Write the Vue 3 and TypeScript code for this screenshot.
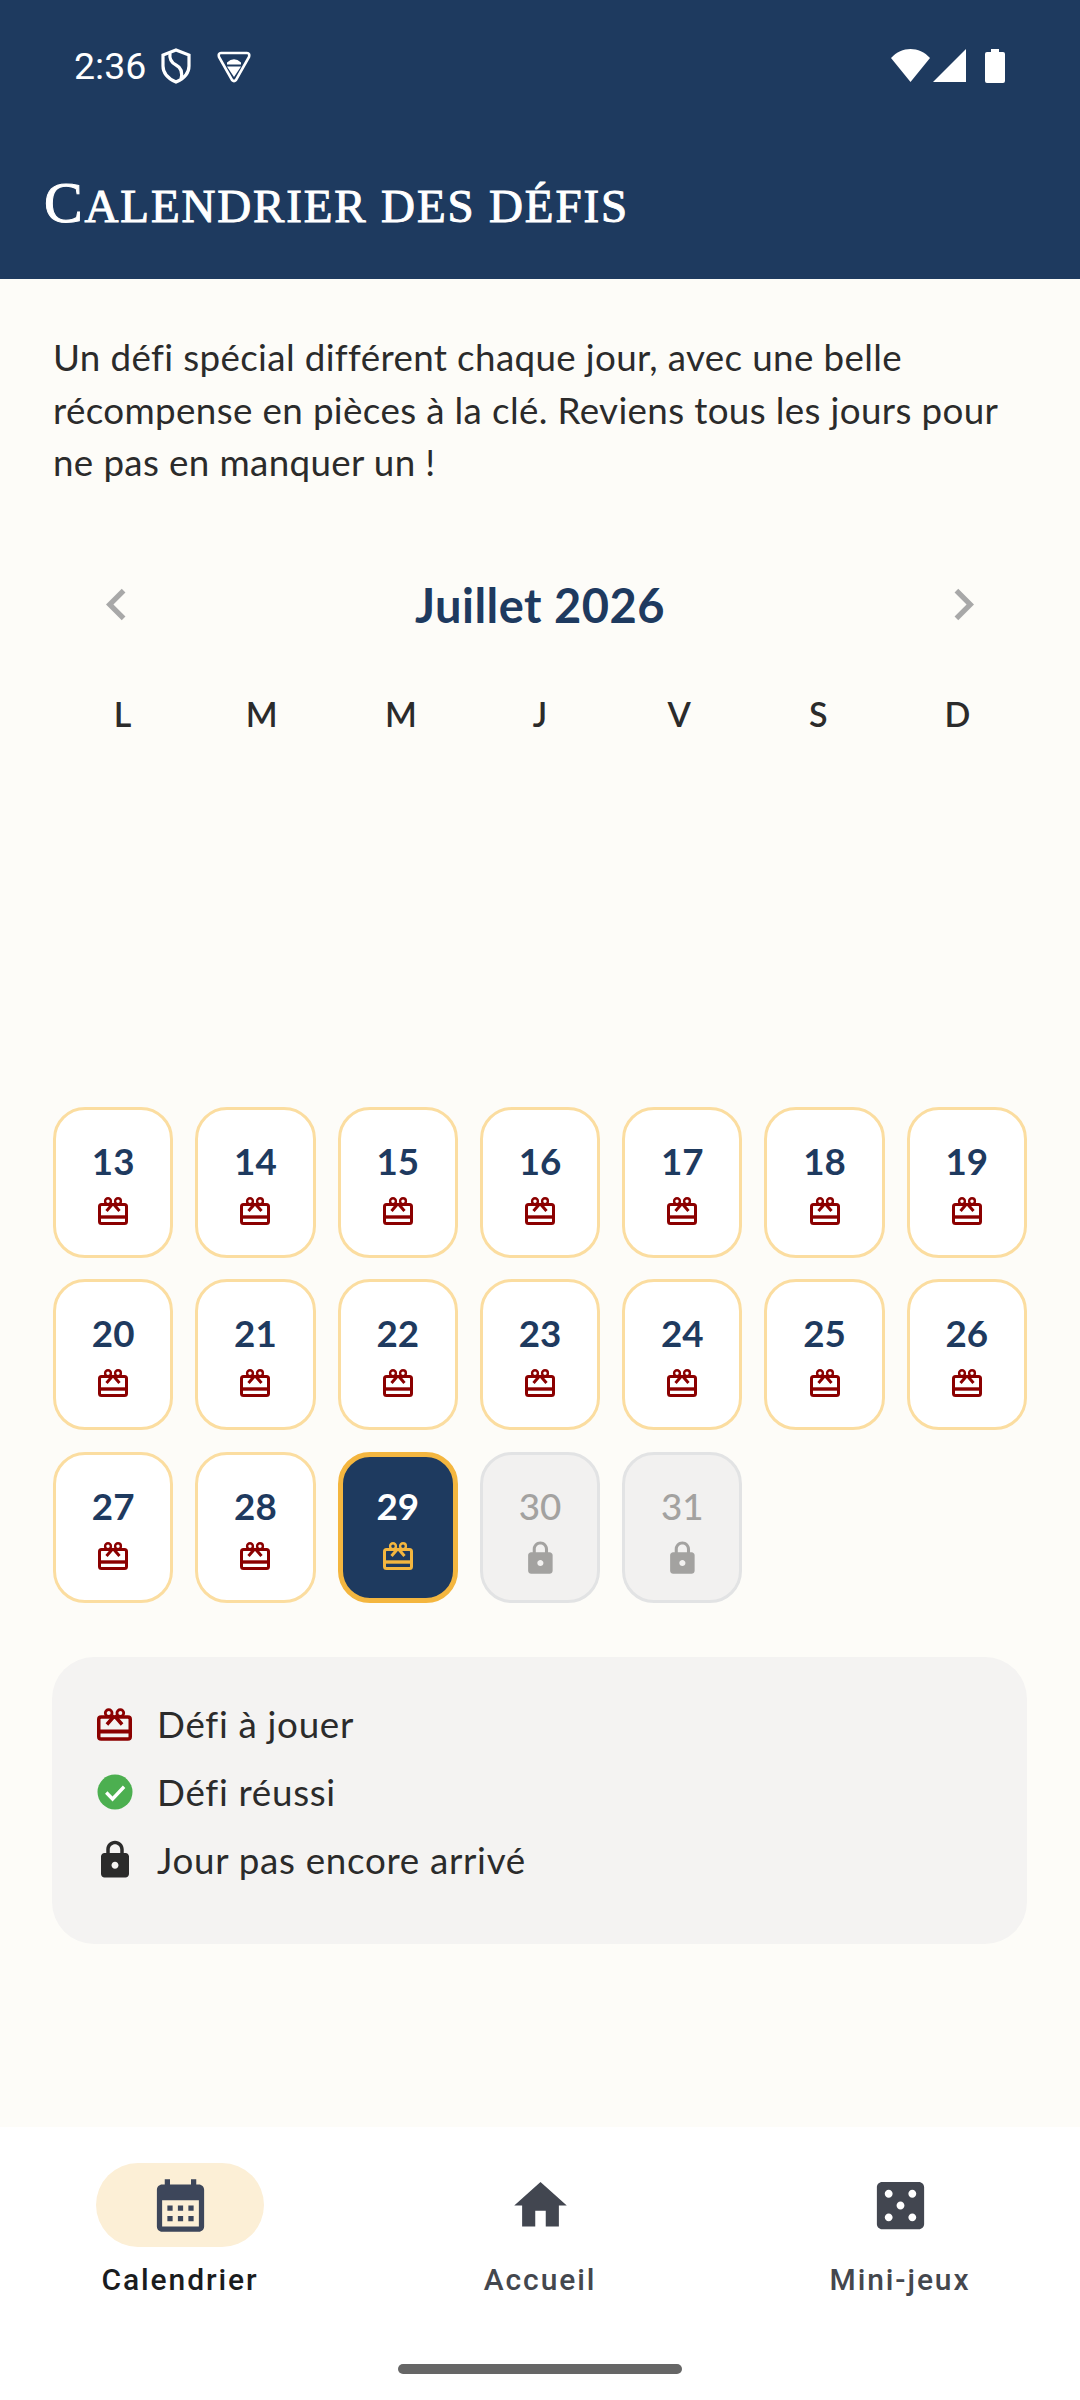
<script setup lang="ts">
type DayState = 'empty' | 'hidden' | 'open' | 'today' | 'locked';

interface Day {
  num: number | null;
  state: DayState;
}

const today = 29;
const weekdays = ['L', 'M', 'M', 'J', 'V', 'S', 'D'];

// juillet 2026 commence un mercredi, les jours avant le 13 ne sont pas affichés
const days: Day[] = [
  { num: null, state: 'empty' },
  { num: null, state: 'empty' },
];
for (let n = 1; n <= 31; n++) {
  let state: DayState = 'open';
  if (n < 13) state = 'hidden';
  else if (n === today) state = 'today';
  else if (n > today) state = 'locked';
  days.push({ num: n, state });
}

const lockPath =
  'M18 8h-1V6c0-2.76-2.24-5-5-5S7 3.24 7 6v2H6c-1.1 0-2 .9-2 2v10c0 1.1.9 2 2 2h12c1.1 0 2-.9 2-2V10c0-1.1-.9-2-2-2zm-6 9c-1.1 0-2-.9-2-2s.9-2 2-2 2 .9 2 2-.9 2-2 2zM9 8V6c0-1.66 1.34-3 3-3s3 1.34 3 3v2H9z';
</script>

<template>
  <div class="page">
    <header class="top">
      <div class="status">
        <span class="time">2:36</span>
        <svg class="st-shield" viewBox="0 0 30 36" fill="none" stroke="#fff" stroke-width="3.2">
          <path d="M15 2 L28 7 V18 C28 26 22 31 15 34 C8 31 2 26 2 18 V7 Z" />
          <path d="M9 5 C8 12 11 15 15 17 C19 19 22 23 20 31" />
        </svg>
        <svg class="st-tri" viewBox="0 0 34 32" fill="none">
          <path d="M4 2 H30 Q33 2 32 6 L19 29 Q17 31 15 29 L2 6 Q1 2 4 2 Z" stroke="#fff" stroke-width="2.6" />
          <path d="M10 11.5 Q17 5 24 11.5 V13.5 H10 Z M10 15.5 H24 L17 26 Z" fill="#fff" />
        </svg>
        <span class="spacer"></span>
        <svg class="st-wifi" viewBox="0 0 40 33" fill="#fff" preserveAspectRatio="none">
          <path d="M0 9 C11 -3 29 -3 40 9 L20 33 Z" />
        </svg>
        <svg class="st-signal" viewBox="0 0 33 33" fill="#fff">
          <path d="M33 0 V33 H0 Z" />
        </svg>
        <svg class="st-batt" viewBox="0 0 20 34" fill="#fff">
          <path d="M6 0 H14 V3 H18 Q20 3 20 5 V32 Q20 34 18 34 H2 Q0 34 0 32 V5 Q0 3 2 3 H6 Z" />
        </svg>
      </div>
      <h1 class="title">Calendrier des défis</h1>
    </header>

    <main class="content">
      <p class="intro">
        Un défi spécial différent chaque jour, avec une belle récompense en pièces à la clé. Reviens tous les jours pour ne pas en manquer un !
      </p>

      <div class="month-row">
        <svg class="chev" viewBox="0 0 24 24"><path d="M15.41 7.41 14 6l-6 6 6 6 1.41-1.41L10.83 12z" /></svg>
        <span class="month">Juillet 2026</span>
        <svg class="chev" viewBox="0 0 24 24"><path d="M8.59 16.59 10 18l6-6-6-6-1.41 1.41L13.17 12z" /></svg>
      </div>

      <div class="weekdays">
        <span v-for="(w, i) in weekdays" :key="i">{{ w }}</span>
      </div>

      <div class="grid">
        <div
          v-for="(d, i) in days"
          :key="i"
          class="cell"
          :class="d.state"
        >
          <template v-if="d.num">
            <span class="num">{{ d.num }}</span>
            <svg v-if="d.state === 'locked'" class="cell-lock" viewBox="0 0 24 24"><path :d="lockPath" /></svg>
            <svg v-else class="gift" viewBox="0 0 30 28" fill="none" stroke="currentColor" stroke-width="3">
              <rect x="1.5" y="7.5" width="27" height="19" rx="2" />
              <path d="M1.5 20 H28.5" stroke-width="3.4" />
              <path d="M15 6.5 L8.5 14 M15 6.5 L21.5 14" stroke-width="3" />
              <circle cx="10" cy="4.2" r="2.9" stroke-width="2.4" />
              <circle cx="20" cy="4.2" r="2.9" stroke-width="2.4" />
            </svg>
          </template>
        </div>
      </div>

      <section class="legend">
        <div class="legend-item">
          <svg class="legend-gift" viewBox="0 0 30 28" fill="none" stroke="#8b0000" stroke-width="3">
            <rect x="1.5" y="7.5" width="27" height="19" rx="2" />
            <path d="M1.5 20 H28.5" stroke-width="3.4" />
            <path d="M15 6.5 L8.5 14 M15 6.5 L21.5 14" stroke-width="3" />
            <circle cx="10" cy="4.2" r="2.9" stroke-width="2.4" />
            <circle cx="20" cy="4.2" r="2.9" stroke-width="2.4" />
          </svg>
          <span>Défi à jouer</span>
        </div>
        <div class="legend-item">
          <svg class="legend-icon" viewBox="0 0 24 24">
            <circle cx="12" cy="12" r="10" fill="#4caf50" />
            <path d="M7 12.3 10.6 16 17.2 9" fill="none" stroke="#fff" stroke-width="1.9" />
          </svg>
          <span>Défi réussi</span>
        </div>
        <div class="legend-item">
          <svg class="legend-icon" viewBox="0 0 24 24" fill="#2b2b2b"><path :d="lockPath" /></svg>
          <span>Jour pas encore arrivé</span>
        </div>
      </section>
    </main>

    <nav class="nav">
      <div class="tabs">
        <div class="tab active">
          <div class="pill">
            <svg viewBox="0 0 24 24"><path d="M19 4h-1V2h-2v2H8V2H6v2H5c-1.11 0-1.99.9-1.99 2L3 20c0 1.1.89 2 2 2h14c1.1 0 2-.9 2-2V6c0-1.1-.9-2-2-2zm0 16H5V10h14v10zM9 14H7v-2h2v2zm4 0h-2v-2h2v2zm4 0h-2v-2h2v2zm-8 4H7v-2h2v2zm4 0h-2v-2h2v2zm4 0h-2v-2h2v2z" /></svg>
          </div>
          <span>Calendrier</span>
        </div>
        <div class="tab">
          <div class="pill">
            <svg viewBox="0 0 24 24"><path d="M10 20v-6h4v6h5v-8h3L12 3 2 12h3v8z" /></svg>
          </div>
          <span>Accueil</span>
        </div>
        <div class="tab">
          <div class="pill">
            <svg viewBox="0 0 24 24"><path d="M19 3H5c-1.1 0-2 .9-2 2v14c0 1.1.9 2 2 2h14c1.1 0 2-.9 2-2V5c0-1.1-.9-2-2-2zM7.5 18c-.83 0-1.5-.67-1.5-1.5S6.67 15 7.5 15s1.5.67 1.5 1.5S8.33 18 7.5 18zm0-9C6.67 9 6 8.33 6 7.5S6.67 6 7.5 6 9 6.67 9 7.5 8.33 9 7.5 9zm4.5 4.5c-.83 0-1.5-.67-1.5-1.5s.67-1.5 1.5-1.5 1.5.67 1.5 1.5-.67 1.5-1.5 1.5zm4.5 4.5c-.83 0-1.5-.67-1.5-1.5s.67-1.5 1.5-1.5 1.5.67 1.5 1.5-.67 1.5-1.5 1.5zm0-9c-.83 0-1.5-.67-1.5-1.5S15.67 6 16.5 6s1.5.67 1.5 1.5S17.33 9 16.5 9z" /></svg>
          </div>
          <span>Mini-jeux</span>
        </div>
      </div>
      <div class="home-bar"></div>
    </nav>
  </div>
</template>

<style scoped>
.page {
  width: 1080px;
  height: 2400px;
  display: flex;
  flex-direction: column;
  background: #fdfcf8;
  font-family: Lato, sans-serif;
  overflow: hidden;
}

.top {
  height: 279px;
  box-sizing: border-box;
  background: #1e3a5f;
  color: #fff;
}

.status {
  height: 168px;
  box-sizing: border-box;
  padding: 48px 75px 0 74px;
  display: flex;
  align-items: flex-start;
}

.time {
  font-family: Roboto, sans-serif;
  font-size: 37.5px;
  line-height: 36px;
}

.st-shield {
  width: 30px;
  height: 36px;
  margin-left: 15px;
}

.st-tri {
  width: 34px;
  height: 32px;
  margin: 3px 0 0 26px;
}

.spacer {
  flex: 1;
}

.st-wifi {
  width: 39px;
  height: 33px;
  margin-top: 1px;
}

.st-signal {
  width: 33px;
  height: 33px;
  margin: 1px 0 0 3px;
}

.st-batt {
  width: 20px;
  height: 34px;
  margin: 1px 0 0 19px;
}

.title {
  margin: 0;
  padding-left: 44px;
  font-family: "Liberation Serif", serif;
  text-transform: uppercase;
  font-weight: 400;
  font-size: 47px;
  line-height: 70px;
  letter-spacing: 1.85px;
  -webkit-text-stroke: 1px #fff;
}

.title::first-letter {
  font-size: 58px;
}

.content {
  flex: 1;
  padding: 52px 53px 0;
}

.intro {
  margin: 0;
  font-size: 36.75px;
  line-height: 52.5px;
  letter-spacing: 0.36px;
  color: #2b2b2b;
}

.month-row {
  height: 84px;
  margin-top: 74px;
  display: flex;
  align-items: center;
  justify-content: space-between;
  padding: 0 32px;
}

.month {
  font-size: 47px;
  font-weight: 700;
  letter-spacing: 0.5px;
  color: #1e3a5f;
}

.chev {
  width: 63px;
  height: 63px;
  fill: #a8a8a8;
}

.weekdays {
  display: grid;
  grid-template-columns: repeat(7, 1fr);
  height: 64px;
  margin-top: 35px;
  align-items: center;
  text-align: center;
  font-size: 34px;
  font-weight: 600;
  color: #2b2b2b;
}

.grid {
  display: grid;
  grid-template-columns: repeat(7, 1fr);
  grid-auto-rows: 151px;
  gap: 21.6px 22px;
  margin-top: 16px;
}

.cell {
  box-sizing: border-box;
  border-radius: 32px;
  display: flex;
  flex-direction: column;
  align-items: center;
  justify-content: center;
}

.cell.hidden,
.cell.empty {
  visibility: hidden;
}

.cell.open {
  background: #fff;
  border: 3px solid #fbdda0;
  color: #8b0000;
}

.cell.today {
  background: #1e3a5f;
  border: 5px solid #f4b63f;
  color: #f4b63f;
}

.cell.locked {
  background: #f2f1f0;
  border: 3px solid #e2e3e4;
  color: #a3a2a0;
}

.num {
  font-size: 36.75px;
  line-height: 44px;
  font-weight: 700;
  color: #1e3a5f;
}

.today .num {
  color: #fff;
}

.locked .num {
  color: #a3a2a0;
  font-weight: 500;
}

.gift {
  width: 30px;
  height: 28px;
  margin: 14px 0 1px;
}

.cell-lock {
  width: 36.75px;
  height: 36.75px;
  margin: 12px 0 -5.75px;
  fill: #a3a2a0;
}

.legend {
  margin: 54px 0 0 -1px;
  height: 287px;
  box-sizing: border-box;
  padding: 41px 42px;
  border-radius: 42px;
  background: #f4f3f2;
  display: flex;
  flex-direction: column;
  gap: 15.5px;
}

.legend-item {
  display: flex;
  align-items: center;
  height: 52.5px;
  font-size: 36.75px;
  letter-spacing: 0.7px;
  color: #2b2b2b;
}

.legend-icon,
.legend-gift {
  flex-shrink: 0;
}

.legend-icon {
  width: 42px;
  height: 42px;
  margin-right: 21px;
}

.legend-gift {
  width: 35px;
  height: 33px;
  margin-left: 3px;
  margin-right: 25px;
}

.nav {
  height: 273px;
  background: #fff;
  display: flex;
  flex-direction: column;
  align-items: center;
}

.tabs {
  width: 100%;
  display: grid;
  grid-template-columns: repeat(3, 1fr);
  padding-top: 36px;
  flex: 1;
}

.tab {
  display: flex;
  flex-direction: column;
  align-items: center;
  font-family: Roboto, sans-serif;
  font-weight: 500;
  font-size: 30px;
  letter-spacing: 1.9px;
  color: #44474e;
}

.tab.active {
  color: #1a1c1e;
}

.pill {
  width: 168px;
  height: 84px;
  border-radius: 42px;
  display: flex;
  align-items: center;
  justify-content: center;
  margin-bottom: 15px;
}

.active .pill {
  background: #fcefd6;
}

.pill svg {
  width: 63px;
  height: 63px;
  fill: #424650;
}

.active .pill svg {
  fill: #3d465a;
}

.home-bar {
  width: 284px;
  height: 10px;
  border-radius: 5px;
  background: #666;
  margin-bottom: 26px;
}
</style>
